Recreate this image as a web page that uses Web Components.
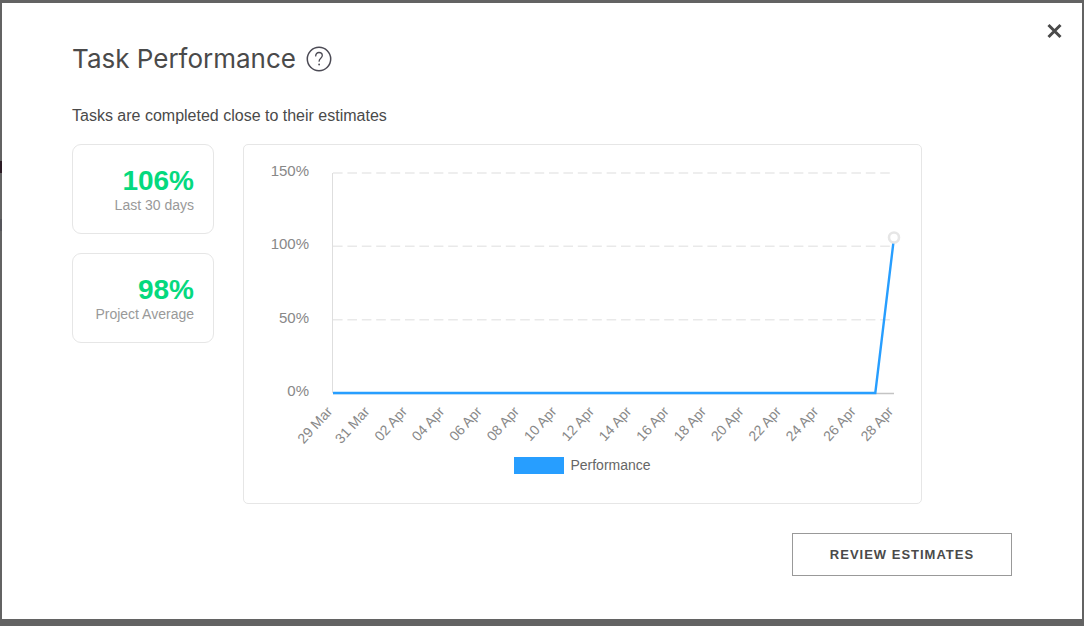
<!DOCTYPE html>
<html lang="en">
<head>
<meta charset="utf-8">
<meta name="viewport" content="width=device-width, initial-scale=1">
<title>Task Performance</title>
<style>
  html { min-height: 100%; background: #636363; }
  body { margin: 0; font-family: "Liberation Sans", Arial, sans-serif; color: #4a4a4a; }
</style>
</head>
<body>
<task-dialog>
  <span slot="title">Task Performance</span>
  <span slot="summary">Tasks are completed close to their estimates</span>
  <stat-card slot="stats" value="106%">Last 30 days</stat-card>
  <stat-card slot="stats" value="98%">Project Average</stat-card>
  <performance-chart slot="chart">Performance</performance-chart>
  <outline-button slot="actions">REVIEW ESTIMATES</outline-button>
</task-dialog>

<script>
class TaskDialog extends HTMLElement {
  constructor() {
    super();
    this.attachShadow({ mode: "open" }).innerHTML = `
      <style>
        :host { display: grid; box-sizing: border-box; min-height: 100vh; padding: 3px 2px 7px;
          background: linear-gradient(#636363 161px, #2b1c25 161px 173px, #636363 173px 219px, #55555b 219px 231px, #636363 231px) no-repeat 0 0 / 2px 100%, #636363; }
        section { display: flex; flex-direction: column; background: #fff; padding: 14px 14px 42px 70px; }
        header { display: flex; justify-content: space-between; align-items: flex-start; }
        .heading { display: flex; align-items: center; gap: 10px; padding-top: 24px; }
        h1 { margin: 0; font: 400 26px/36px Inter, sans-serif; }
        button { display: grid; place-items: center; width: 28px; height: 28px; padding: 0; border: 0; background: none; color: #4a4a4a; cursor: pointer; }
        svg { display: block; }
        .help { width: 26px; }
        p { margin: 29px 0 18px; font-size: 16px; line-height: 20px; }
        .content { display: flex; align-items: flex-start; gap: 29px; padding-right: 146px; }
        .stats { display: grid; gap: 19px; flex: 0 0 142px; }
        .chart { flex: 1; min-width: 0; }
        footer { display: flex; justify-content: flex-end; padding: 29px 56px 0 0; }
      </style>
      <section role="dialog" aria-labelledby="title">
        <header>
          <div class="heading">
            <h1 id="title"><slot name="title"></slot></h1>
            <button class="help" aria-label="Help">
              <svg width="26" height="26" viewBox="0 0 26 26" fill="none" stroke="#4b4a54" stroke-linecap="round">
                <circle cx="13" cy="13" r="11.7" stroke-width="1.5"/>
                <path d="M9.7 9.9c0-2 1.3-3.4 3.3-3.4s3.3 1.3 3.3 3.1c0 2.7-3.2 2.6-3.2 5.6" stroke-width="1.3"/>
                <circle cx="13.1" cy="18.5" r=".9" fill="#4b4a54" stroke="none"/>
              </svg>
            </button>
          </div>
          <button aria-label="Close">
            <svg width="16" height="16" viewBox="0 0 16 16" stroke="#4a4a4a" stroke-width="3"><path d="M2.500 2l12 12M14.500 2l-12 12"/></svg>
          </button>
        </header>
        <p><slot name="summary"></slot></p>
        <div class="content">
          <div class="stats"><slot name="stats"></slot></div>
          <div class="chart"><slot name="chart"></slot></div>
        </div>
        <footer><slot name="actions"></slot></footer>
      </section>`;
  }
}

class StatCard extends HTMLElement {
  constructor() {
    super();
    this.attachShadow({ mode: "open" }).innerHTML = `
      <style>
        :host { display: block; box-sizing: border-box; padding: 20px 19px 19px; border: 1px solid #e6e6e6; border-radius: 9px; text-align: right; }
        strong { display: block; font-size: 28px; line-height: 32px; color: #05d97e; }
        span { display: block; font-size: 14px; line-height: 17px; color: #999; white-space: nowrap; }
      </style>
      <strong></strong><span><slot></slot></span>`;
  }
  connectedCallback() {
    this.shadowRoot.querySelector("strong").textContent = this.getAttribute("value");
  }
}

class PerformanceChart extends HTMLElement {
  constructor() {
    super();
    const left = 89, right = 650, top = 28, bottom = 248;
    const dates = ["29 Mar", "31 Mar", "02 Apr", "04 Apr", "06 Apr", "08 Apr", "10 Apr", "12 Apr",
                   "14 Apr", "16 Apr", "18 Apr", "20 Apr", "22 Apr", "24 Apr", "26 Apr", "28 Apr"];
    const y = v => bottom - (bottom - top) * v / 150;
    const x = day => left + (right - left) * day / 30;
    const rows = [150, 100, 50, 0].map(v =>
      (v ? `<path class="grid" d="M${left} ${y(v)}H${right - 3}"/>` : "") +
      `<text class="scale" x="65" y="${Math.round(y(v)) + 3}">${v}%</text>`).join("");
    const labels = dates.map((d, i) =>
      `<text class="date" transform="translate(${x(i * 2)} 267) rotate(-48)">${d}</text>`).join("");
    this.attachShadow({ mode: "open" }).innerHTML = `
      <style>
        :host { display: block; box-sizing: border-box; border: 1px solid #e6e6e6; border-radius: 5px; padding-bottom: 28px; }
        svg { display: block; width: 100%; height: auto; }
        text { text-anchor: end; fill: #888; }
        .scale { font-size: 15px; }
        .date { font-size: 14px; }
        .grid { stroke: #e9e9e9; stroke-width: 1.5; stroke-dasharray: 9.6 4.8; }
        .legend { display: flex; justify-content: center; align-items: center; gap: 6px; font-size: 14px; line-height: 20px; color: #666; }
        i { width: 50px; height: 17px; background: #279eff; }
      </style>
      <svg viewBox="0 0 677 310" role="img" aria-label="Performance by day">
        ${rows}
        <path d="M88.5 28V248" stroke="#dedede"/>
        <path d="M89 248.5H650" stroke="#c4c4c4" stroke-width="1.5"/>
        ${labels}
        <path d="M${left} ${y(0)}H${x(29)}L${right} ${y(106)}" fill="none" stroke="#279eff" stroke-width="2.4"/>
        <circle cx="650" cy="92.500" r="5" fill="#fff" stroke="#e6e6e6" stroke-width="2.6"/>
      </svg>
      <div class="legend"><i></i><span><slot></slot></span></div>`;
  }
}

class OutlineButton extends HTMLElement {
  constructor() {
    super();
    this.attachShadow({ mode: "open" }).innerHTML = `
      <style>
        :host { display: block; }
        button { min-width: 220px; padding: 11px 24px; border: 1px solid #999; background: #fff; color: #4a4a4a;
          font: 700 13px/19px "Liberation Sans", Arial, sans-serif; letter-spacing: 1px; cursor: pointer; }
      </style>
      <button><slot></slot></button>`;
  }
}

customElements.define("task-dialog", TaskDialog);
customElements.define("stat-card", StatCard);
customElements.define("performance-chart", PerformanceChart);
customElements.define("outline-button", OutlineButton);
</script>
</body>
</html>
